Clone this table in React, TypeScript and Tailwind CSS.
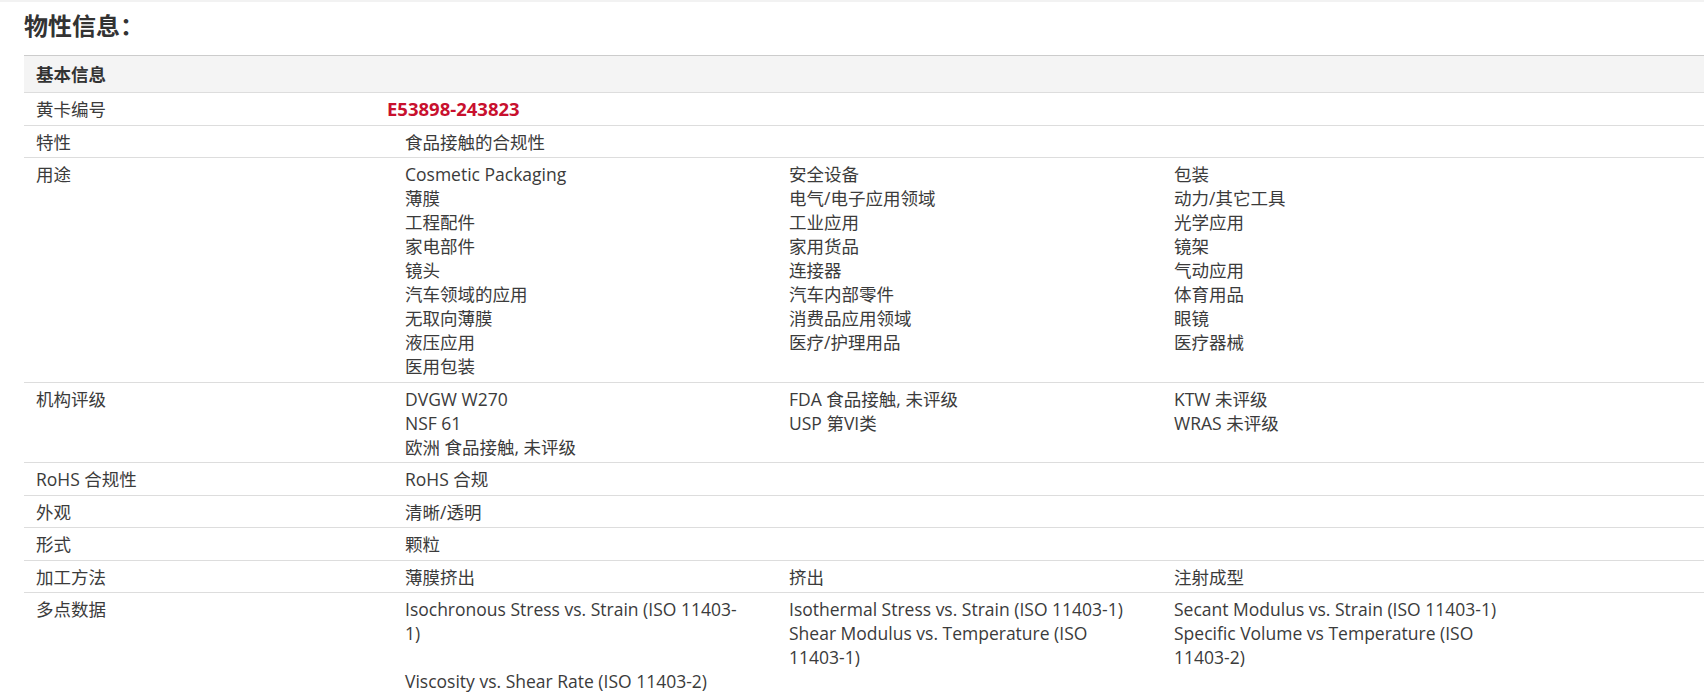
import React from 'react';

type Row = {
  label: string;
  values?: string[][];
  code?: string;
};

// Table rows, each value column listed top to bottom
const rows: Row[] = [
  { label: '黄卡编号', code: 'E53898-243823' },
  { label: '特性', values: [['食品接触的合规性']] },
  {
    label: '用途',
    values: [
      ['Cosmetic Packaging', '薄膜', '工程配件', '家电部件', '镜头', '汽车领域的应用', '无取向薄膜', '液压应用', '医用包装'],
      ['安全设备', '电气/电子应用领域', '工业应用', '家用货品', '连接器', '汽车内部零件', '消费品应用领域', '医疗/护理用品'],
      ['包装', '动力/其它工具', '光学应用', '镜架', '气动应用', '体育用品', '眼镜', '医疗器械'],
    ],
  },
  {
    label: '机构评级',
    values: [
      ['DVGW W270', 'NSF 61', '欧洲 食品接触, 未评级'],
      ['FDA 食品接触, 未评级', 'USP 第VI类'],
      ['KTW 未评级', 'WRAS 未评级'],
    ],
  },
  { label: 'RoHS 合规性', values: [['RoHS 合规']] },
  { label: '外观', values: [['清晰/透明']] },
  { label: '形式', values: [['颗粒']] },
  { label: '加工方法', values: [['薄膜挤出'], ['挤出'], ['注射成型']] },
  {
    label: '多点数据',
    values: [
      ['Isochronous Stress vs. Strain (ISO 11403-1)', '', 'Viscosity vs. Shear Rate (ISO 11403-2)'],
      ['Isothermal Stress vs. Strain (ISO 11403-1)', 'Shear Modulus vs. Temperature (ISO 11403-1)'],
      ['Secant Modulus vs. Strain (ISO 11403-1)', 'Specific Volume vs Temperature (ISO 11403-2)'],
    ],
  },
];

export default function App() {
  return (
    <div
      className="min-h-screen bg-white text-[#333] border-t-2 border-[#f2f2f2]"
      style={{ fontFamily: '"Open Sans", "Noto Sans CJK SC", sans-serif' }}
    >
      <div className="pl-6">
        {/* Title */}
        <h2 className="pt-2 mb-[13px] text-2xl leading-8 font-bold">物性信息：</h2>

        {/* Properties table */}
        <div className="text-[17.5px] leading-6 text-[#3b3b3b]">
          <div className="bg-[#f4f4f4] border-t border-b border-t-[#cccccc] border-b-[#dddddd] pl-3 pt-[6px] pb-[6px] font-bold text-[#333]">
            基本信息
          </div>

          {rows.map((row) => (
            <div key={row.label} className="flex border-b border-[#dddddd]">
              <div className="w-[363px] shrink-0 pl-3 pt-1 pb-[3.5px]">{row.label}</div>
              {row.code ? (
                <div className="pt-1 pb-[3.5px] font-bold text-[#c8102e] text-[18.5px]">{row.code}</div>
              ) : (
                <div className="grid grid-cols-[384px_385px_384px] pl-[18px] pt-1 pb-[3.5px]">
                  {row.values?.map((col, i) => (
                    <div key={i} className="pr-[40px]">
                      {col.map((item, j) => (
                        <div key={j} className="min-h-6">
                          {item}
                        </div>
                      ))}
                    </div>
                  ))}
                </div>
              )}
            </div>
          ))}
        </div>
      </div>
    </div>
  );
}
